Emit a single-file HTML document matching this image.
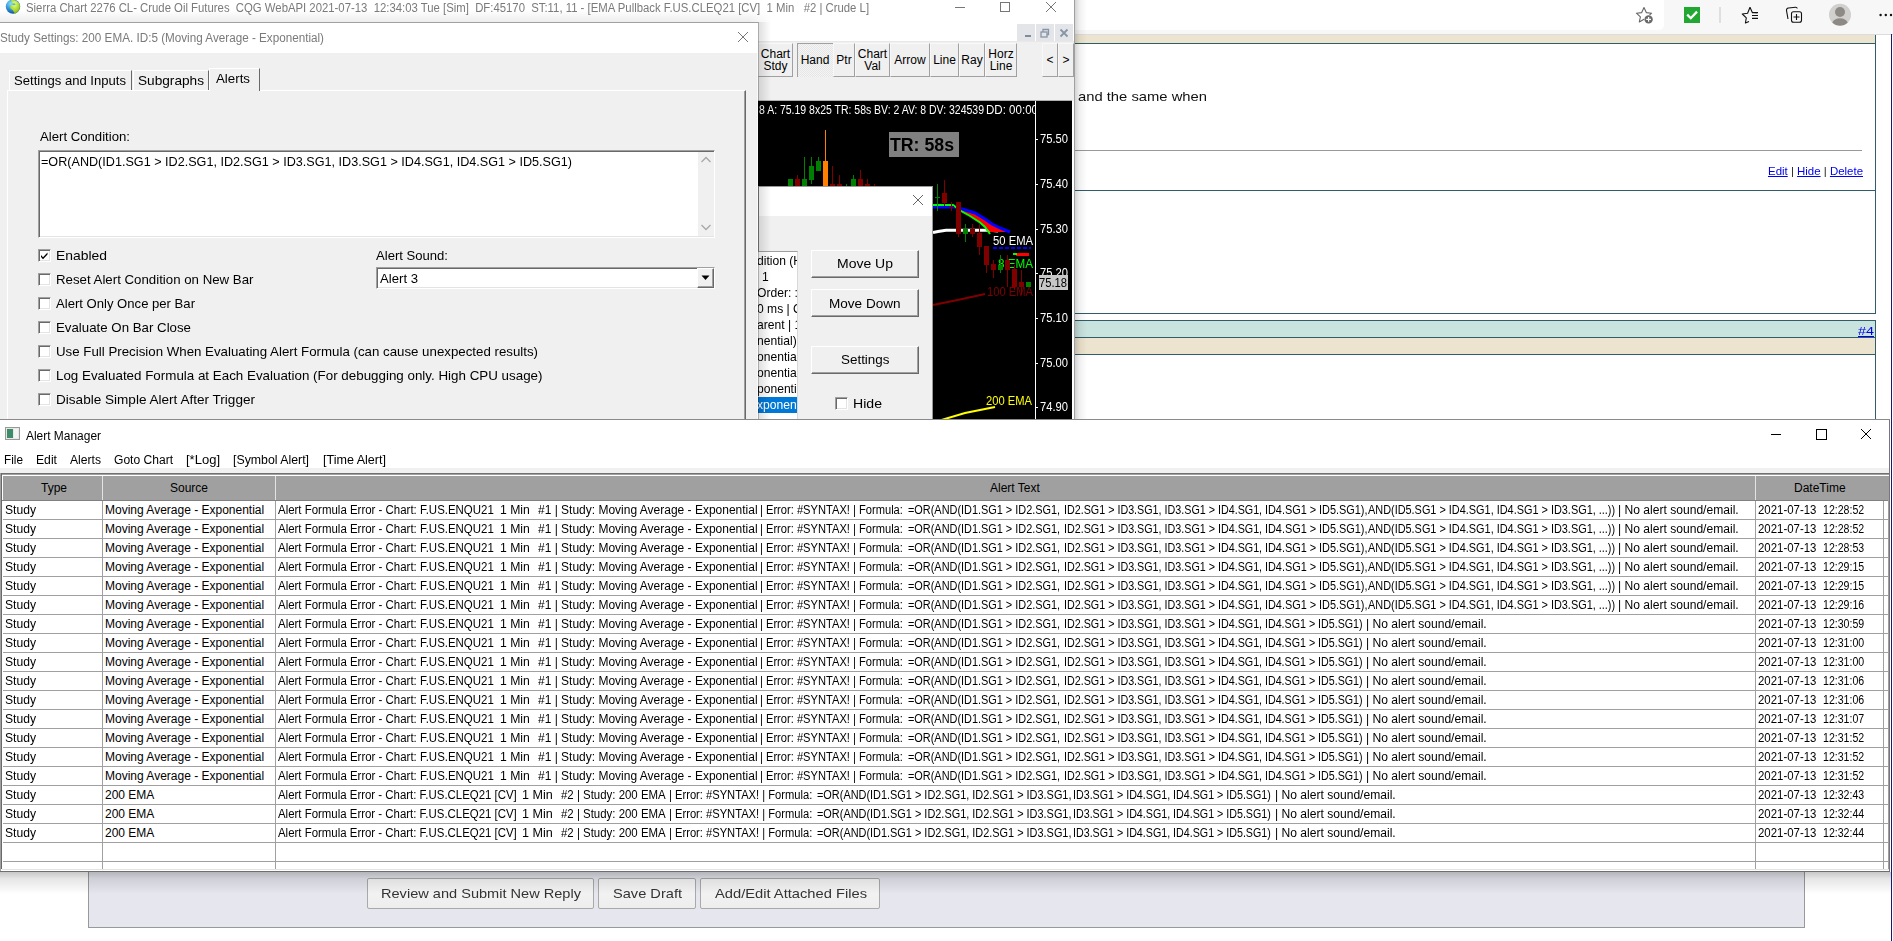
<!DOCTYPE html>
<html><head><meta charset="utf-8"><style>
html,body{margin:0;padding:0;width:1893px;height:941px;overflow:hidden;background:#fff;position:relative;font-family:"Liberation Sans",sans-serif;}
.t{position:absolute;white-space:pre;font-family:"Liberation Sans",sans-serif;}
.c{font-size:12px;line-height:12px;color:#000;}
.r{position:absolute;}
svg{position:absolute;}
</style></head><body>
<div class="r" style="left:1074px;top:0px;width:819px;height:34px;background:#f7f7f7;"></div>
<div class="r" style="left:1074px;top:0px;width:590px;height:30px;background:#ffffff;border-bottom-right-radius:5px;"></div>
<div class="r" style="left:1074px;top:34px;width:819px;height:1px;background:#dcdcdc;"></div>
<svg style="left:1630px;top:0px" width="263" height="32" viewBox="1630 0 263 32"><path d="M1644 7.5 L1646.3 12.6 L1651.6 13.2 L1647.6 16.8 L1648.7 22 L1644 19.3 L1639.3 22 L1640.4 16.8 L1636.4 13.2 L1641.7 12.6 Z" fill="none" stroke="#666" stroke-width="1.1" stroke-linejoin="round"></path><circle cx="1648.6" cy="19.4" r="4.6" fill="#fff"></circle><circle cx="1648.6" cy="19.4" r="4.2" fill="#6b6b6b"></circle><path d="M1648.6 17v4.8M1646.2 19.4h4.8" stroke="#fff" stroke-width="1.2"></path><rect x="1684" y="7" width="16" height="16" fill="#22a832"></rect><path d="M1687.2 14.6 L1690.8 18.2 L1697 11.6" stroke="#fff" stroke-width="2.3" fill="none"></path><rect x="1719.5" y="7" width="1" height="16" fill="#c8c8c8"></rect><path d="M1750 7.3 L1752.2 12.2 L1757 12.6 M1749 21.5 L1745.4 23 L1746.3 17.8 L1742.3 14 L1747.6 13.3 L1750 7.3" fill="none" stroke="#111" stroke-width="1.1" stroke-linejoin="round"></path><path d="M1752 12.6h6M1752 15.5h6M1752 18.4h6" stroke="#111" stroke-width="1.1"></path><path d="M1788 19 L1786.5 10.5 Q1786.3 8.3 1788.5 8 L1795.5 7.2 Q1797 7.1 1797.3 8.5" fill="none" stroke="#111" stroke-width="1.1"></path><rect x="1791.5" y="11.8" width="10" height="10.5" rx="2" fill="#f7f7f7" stroke="#111" stroke-width="1.1"></rect><path d="M1796.5 14v6M1793.5 17h6" stroke="#111" stroke-width="1.1"></path><circle cx="1840" cy="14.8" r="11" fill="#d2d0ce"></circle><circle cx="1840" cy="12" r="5" fill="#8d8a86"></circle><path d="M1832.3 22.8 Q1834 18.3 1840 18.2 Q1846 18.3 1847.7 22.8 Q1844.5 25.8 1840 25.8 Q1835.5 25.8 1832.3 22.8Z" fill="#8d8a86"></path><circle cx="1880.6" cy="15" r="1.2" fill="#111"></circle><circle cx="1885.8" cy="15" r="1.2" fill="#111"></circle><circle cx="1891" cy="15" r="1.2" fill="#111"></circle></svg>
<div class="r" style="left:1074px;top:35px;width:801px;height:8px;background:#ede4cf;"></div>
<div class="r" style="left:1074px;top:43px;width:802px;height:1px;background:#2f5d68;"></div>
<div class="r" style="left:1875px;top:35px;width:1px;height:279px;background:#2f5d68;"></div>
<div class="t " style="left: 1078px; top: 90px; font-size: 13px; line-height: 13px; color: rgb(17, 17, 17); font-weight: 400; transform: scaleX(1.1369); transform-origin: 0px 0px;">and the same when</div>
<div class="r" style="left:1074px;top:150px;width:788px;height:1px;background:#999;"></div>
<div class="t" style="left: 1768px; top: 165.7px; font-size: 11px; line-height: 11px; color: rgb(34, 34, 34); transform: scaleX(1.0398); transform-origin: 0px 0px;"><u style="color:#0000ee">Edit</u> | <u style="color:#0000ee">Hide</u> | <u style="color:#0000ee">Delete</u></div>
<div class="r" style="left:1074px;top:190px;width:802px;height:1px;background:#2f5d68;"></div>
<div class="r" style="left:1074px;top:313px;width:802px;height:1px;background:#2f5d68;"></div>
<div class="r" style="left:1074px;top:320px;width:802px;height:1px;background:#2f5d68;"></div>
<div class="r" style="left:1074px;top:321px;width:801px;height:17px;background:#c9e3df;"></div>
<div class="r" style="left:1074px;top:337px;width:802px;height:1px;background:#2f5d68;"></div>
<div class="r" style="left:1074px;top:338px;width:801px;height:16px;background:#ede4cf;"></div>
<div class="r" style="left:1074px;top:354px;width:802px;height:1px;background:#2f5d68;"></div>
<div class="r" style="left:1875px;top:320px;width:1px;height:550px;background:#2f5d68;"></div>
<div class="t" style="left: 1858px; top: 325.7px; font-size: 11px; line-height: 11px; color: rgb(0, 0, 238); transform: scaleX(1.3061); transform-origin: 0px 0px;"><u>#4</u></div>
<div class="r" style="left:1891px;top:34px;width:1px;height:907px;background:#1a1a6e;"></div>
<div class="r" style="left:88px;top:860px;width:1717px;height:68px;background:#e6e6ef;border:1px solid #999;box-sizing:border-box;"></div>
<div class="r" style="left:367px;top:878px;width:227px;height:31px;background:linear-gradient(#f7f7f7,#ededed);border:1px solid #a9a9a9;box-sizing:border-box;border-radius:2px"></div>
<div class="t " style="left: 381px; top: 887px; font-size: 13px; line-height: 13px; color: rgb(51, 51, 51); font-weight: 400; transform: scaleX(1.1206); transform-origin: 0px 0px;">Review and Submit New Reply</div>
<div class="r" style="left:598px;top:878px;width:98px;height:31px;background:linear-gradient(#f7f7f7,#ededed);border:1px solid #a9a9a9;box-sizing:border-box;border-radius:2px"></div>
<div class="t " style="left: 613px; top: 887px; font-size: 13px; line-height: 13px; color: rgb(51, 51, 51); font-weight: 400; transform: scaleX(1.1234); transform-origin: 0px 0px;">Save Draft</div>
<div class="r" style="left:700px;top:878px;width:180px;height:31px;background:linear-gradient(#f7f7f7,#ededed);border:1px solid #a9a9a9;box-sizing:border-box;border-radius:2px"></div>
<div class="t " style="left: 715px; top: 887px; font-size: 13px; line-height: 13px; color: rgb(51, 51, 51); font-weight: 400; transform: scaleX(1.1308); transform-origin: 0px 0px;">Add/Edit Attached Files</div>
<div class="r" style="left:0;top:872px;width:1891px;height:22px;background:linear-gradient(rgba(0,0,0,0.22),rgba(0,0,0,0.1) 30%,rgba(0,0,0,0));"></div>
<div class="r" style="left:0px;top:0px;width:1074px;height:22px;background:#fff;"></div>
<div class="r" style="left:1074px;top:0px;width:1px;height:420px;background:#a0a0a0;"></div>
<div class="r" style="left:1075px;top:0;width:12px;height:420px;background:linear-gradient(90deg,rgba(0,0,0,0.17),rgba(0,0,0,0.06) 40%,rgba(0,0,0,0));"></div>
<div class="r" style="left:0;top:10px;width:772px;height:12px;background:linear-gradient(rgba(0,0,0,0),rgba(0,0,0,0.07));-webkit-mask-image:linear-gradient(90deg,#000 97%,transparent);mask-image:linear-gradient(90deg,#000 97%,transparent)"></div>
<svg style="left:5px;top:-1px" width="16" height="16" viewBox="0 0 16 16"><defs><radialGradient id="gb" cx="0.35" cy="0.3" r="0.8"><stop offset="0" stop-color="#7fe0ff"></stop><stop offset="0.5" stop-color="#2f8fd8"></stop><stop offset="1" stop-color="#0b3f96"></stop></radialGradient><radialGradient id="gn" cx="0.45" cy="0.3" r="0.8"><stop offset="0" stop-color="#e8ff80"></stop><stop offset="0.6" stop-color="#a6d42a"></stop><stop offset="1" stop-color="#6c9a10"></stop></radialGradient></defs><circle cx="8" cy="7.6" r="7.2" fill="url(#gb)"></circle><path d="M6 1.2 Q11 0.6 14.4 4.5 Q15.6 8 14 11 Q12.5 13.8 10 14.8 L8.2 12 Q7.6 10.5 5.8 10 Q4.6 8.6 5.4 6.6 Q6.4 5.6 9 6.2 L10.8 5.2 Q9.5 4 7.6 4.4 Q6.2 3.8 6 1.2Z" fill="url(#gn)"></path></svg>
<div class="t " style="left: 26px; top: 1.84px; font-size: 12px; line-height: 12px; color: rgb(122, 122, 122); font-weight: 400; transform: scaleX(0.9449); transform-origin: 0px 0px;">Sierra Chart 2276 CL- Crude Oil Futures  CQG WebAPI 2021-07-13  12:34:03 Tue [Sim]  DF:45170  ST:11, 11 - [EMA Pullback F.US.CLEQ21 [CV]  1 Min   #2 | Crude L]</div>
<div class="r" style="left:955px;top:7px;width:10px;height:1px;background:#777;"></div>
<div class="r" style="left:1000px;top:2px;width:8px;height:8px;border:1px solid #777"></div>
<svg style="left:1045px;top:1px" width="12" height="12"><path d="M1 1L11 11M11 1L1 11" stroke="#777" stroke-width="1"></path></svg>
<div class="r" style="left:758px;top:22px;width:316px;height:20px;background:#fff;"></div>
<div class="r" style="left:1017px;top:24px;width:18px;height:18px;background:#e3e5e8;"></div>
<div class="r" style="left:1036px;top:24px;width:18px;height:18px;background:#e3e5e8;"></div>
<div class="r" style="left:1055px;top:24px;width:18px;height:18px;background:#e3e5e8;"></div>
<div class="r" style="left:1025px;top:35px;width:6px;height:2px;background:#7f8c9a;"></div>
<svg style="left:1040px;top:28px" width="10" height="10"><rect x="1" y="4" width="6" height="5" fill="none" stroke="#8796a6" stroke-width="1.3"></rect><path d="M3 4V1.5H8.5V6.5H7" fill="none" stroke="#8796a6" stroke-width="1.3"></path></svg>
<svg style="left:1059px;top:28px" width="10" height="10"><path d="M1.5 1.5L8.5 8.5M8.5 1.5L1.5 8.5" stroke="#8796a6" stroke-width="1.8"></path></svg>
<div class="r" style="left:758px;top:42px;width:316px;height:59px;background:#f0f0f0;"></div>
<div class="r" style="left:758px;top:41px;width:316px;height:1px;background:#e8e8e8;"></div>
<div class="r" style="left:758px;top:43px;width:35px;height:34px;box-sizing:border-box;border-right:1px solid #a0a0a0;border-bottom:1px solid #a0a0a0;border-left:1px solid #f8f8f8;border-top:1px solid #f8f8f8;background:#f0f0f0"></div>
<div class="t" style="left:758px;width:35px;text-align:center;top:48px;font-size:12px;line-height:12px;color:#000">Chart<br>Stdy</div>
<div class="r" style="left:797px;top:43px;width:36px;height:34px;box-sizing:border-box;border-left:1px solid #a0a0a0;border-top:1px solid #a0a0a0;background:repeating-conic-gradient(#f4f4f4 0 25%,#e6e6e6 0 50%) 0 0/2px 2px"></div>
<div class="t" style="left:797px;width:36px;text-align:center;top:54px;font-size:12px;line-height:12px;color:#000">Hand</div>
<div class="r" style="left:833px;top:43px;width:22px;height:34px;box-sizing:border-box;border-right:1px solid #a0a0a0;border-bottom:1px solid #a0a0a0;border-left:1px solid #f8f8f8;border-top:1px solid #f8f8f8;background:#f0f0f0"></div>
<div class="t" style="left:833px;width:22px;text-align:center;top:54px;font-size:12px;line-height:12px;color:#000">Ptr</div>
<div class="r" style="left:855px;top:43px;width:35px;height:34px;box-sizing:border-box;border-right:1px solid #a0a0a0;border-bottom:1px solid #a0a0a0;border-left:1px solid #f8f8f8;border-top:1px solid #f8f8f8;background:#f0f0f0"></div>
<div class="t" style="left:855px;width:35px;text-align:center;top:48px;font-size:12px;line-height:12px;color:#000">Chart<br>Val</div>
<div class="r" style="left:890px;top:43px;width:40px;height:34px;box-sizing:border-box;border-right:1px solid #a0a0a0;border-bottom:1px solid #a0a0a0;border-left:1px solid #f8f8f8;border-top:1px solid #f8f8f8;background:#f0f0f0"></div>
<div class="t" style="left:890px;width:40px;text-align:center;top:54px;font-size:12px;line-height:12px;color:#000">Arrow</div>
<div class="r" style="left:930px;top:43px;width:29px;height:34px;box-sizing:border-box;border-right:1px solid #a0a0a0;border-bottom:1px solid #a0a0a0;border-left:1px solid #f8f8f8;border-top:1px solid #f8f8f8;background:#f0f0f0"></div>
<div class="t" style="left:930px;width:29px;text-align:center;top:54px;font-size:12px;line-height:12px;color:#000">Line</div>
<div class="r" style="left:959px;top:43px;width:26px;height:34px;box-sizing:border-box;border-right:1px solid #a0a0a0;border-bottom:1px solid #a0a0a0;border-left:1px solid #f8f8f8;border-top:1px solid #f8f8f8;background:#f0f0f0"></div>
<div class="t" style="left:959px;width:26px;text-align:center;top:54px;font-size:12px;line-height:12px;color:#000">Ray</div>
<div class="r" style="left:985px;top:43px;width:32px;height:34px;box-sizing:border-box;border-right:1px solid #a0a0a0;border-bottom:1px solid #a0a0a0;border-left:1px solid #f8f8f8;border-top:1px solid #f8f8f8;background:#f0f0f0"></div>
<div class="t" style="left:985px;width:32px;text-align:center;top:48px;font-size:12px;line-height:12px;color:#000">Horz<br>Line</div>
<div class="r" style="left:1042px;top:43px;width:16px;height:34px;box-sizing:border-box;border-right:1px solid #a0a0a0;border-bottom:1px solid #a0a0a0;border-left:1px solid #f8f8f8;border-top:1px solid #f8f8f8;background:#f0f0f0"></div>
<div class="t" style="left:1042px;width:16px;text-align:center;top:54px;font-size:12px;line-height:12px;color:#000">&lt;</div>
<div class="r" style="left:1058px;top:43px;width:16px;height:34px;box-sizing:border-box;border-right:1px solid #a0a0a0;border-bottom:1px solid #a0a0a0;border-left:1px solid #f8f8f8;border-top:1px solid #f8f8f8;background:#f0f0f0"></div>
<div class="t" style="left:1058px;width:16px;text-align:center;top:54px;font-size:12px;line-height:12px;color:#000">&gt;</div>
<div class="r" style="left:1072px;top:101px;width:2px;height:319px;background:#fff;"></div>
<div class="r" style="left:758px;top:100px;width:314px;height:1px;background:#b0b0b0;"></div>
<div class="r" style="left:758px;top:101px;width:314px;height:319px;background:#000;"></div>
<div class="t " style="left: 759px; top: 103.84px; font-size: 12px; line-height: 12px; color: rgb(255, 255, 255); font-weight: 400; transform: scaleX(0.873); transform-origin: 0px 0px;">8 A: 75.19 8x25 TR: 58s BV: 2 AV: 8 DV: 324539</div>
<div class="t " style="left: 986px; top: 103.84px; font-size: 12px; line-height: 12px; color: rgb(255, 255, 255); font-weight: 400; clip-path: inset(0px 3px 0px 0px); transform: scaleX(0.9624); transform-origin: 0px 0px;">DD: 00:00</div>
<div class="r" style="left:1035px;top:101px;width:1px;height:319px;background:#fff;"></div>
<div class="r" style="left:1036px;top:139px;width:2px;height:1px;background:#fff;"></div>
<div class="t " style="left: 1040px; top: 132.84px; font-size: 12px; line-height: 12px; color: rgb(255, 255, 255); font-weight: 400; transform: scaleX(0.9324); transform-origin: 0px 0px;">75.50</div>
<div class="r" style="left:1036px;top:184px;width:2px;height:1px;background:#fff;"></div>
<div class="t " style="left: 1040px; top: 177.84px; font-size: 12px; line-height: 12px; color: rgb(255, 255, 255); font-weight: 400; transform: scaleX(0.9324); transform-origin: 0px 0px;">75.40</div>
<div class="r" style="left:1036px;top:229px;width:2px;height:1px;background:#fff;"></div>
<div class="t " style="left: 1040px; top: 222.84px; font-size: 12px; line-height: 12px; color: rgb(255, 255, 255); font-weight: 400; transform: scaleX(0.9324); transform-origin: 0px 0px;">75.30</div>
<div class="r" style="left:1036px;top:273px;width:2px;height:1px;background:#fff;"></div>
<div class="t " style="left: 1040px; top: 266.84px; font-size: 12px; line-height: 12px; color: rgb(255, 255, 255); font-weight: 400; transform: scaleX(0.9324); transform-origin: 0px 0px;">75.20</div>
<div class="r" style="left:1036px;top:318px;width:2px;height:1px;background:#fff;"></div>
<div class="t " style="left: 1040px; top: 311.84px; font-size: 12px; line-height: 12px; color: rgb(255, 255, 255); font-weight: 400; transform: scaleX(0.9324); transform-origin: 0px 0px;">75.10</div>
<div class="r" style="left:1036px;top:363px;width:2px;height:1px;background:#fff;"></div>
<div class="t " style="left: 1040px; top: 356.84px; font-size: 12px; line-height: 12px; color: rgb(255, 255, 255); font-weight: 400; transform: scaleX(0.9324); transform-origin: 0px 0px;">75.00</div>
<div class="r" style="left:1036px;top:407px;width:2px;height:1px;background:#fff;"></div>
<div class="t " style="left: 1040px; top: 400.84px; font-size: 12px; line-height: 12px; color: rgb(255, 255, 255); font-weight: 400; transform: scaleX(0.9324); transform-origin: 0px 0px;">74.90</div>
<div class="r" style="left:1039px;top:275px;width:29px;height:15px;background:#c8c8c8;"></div>
<div class="t " style="left: 1039px; top: 276.84px; font-size: 12px; line-height: 12px; color: rgb(0, 0, 0); font-weight: 400; transform: scaleX(0.9324); transform-origin: 0px 0px;">75.18</div>
<div class="r" style="left:889px;top:132px;width:70px;height:25px;background:#808080;"></div>
<div class="t " style="left: 890px; top: 137.19px; font-size: 17.5px; line-height: 17.5px; color: rgb(0, 0, 0); font-weight: 700; transform: scaleX(1.0124); transform-origin: 0px 0px;">TR: 58s</div>
<div class="t " style="left: 993px; top: 234.84px; font-size: 12px; line-height: 12px; color: rgb(255, 255, 255); font-weight: 400; transform: scaleX(0.937); transform-origin: 0px 0px;">50 EMA</div>
<div class="r" style="left:993px;top:247px;width:38px;height:2px;background:repeating-linear-gradient(90deg,#0000ff 0 4px,transparent 4px 6px)"></div>
<div class="r" style="left:1016px;top:253px;width:13px;height:3px;background:#ff0000;"></div>
<div class="r" style="left:1013px;top:253px;width:4px;height:2px;background:#00ff00;"></div>
<div class="t " style="left: 998px; top: 257.84px; font-size: 12px; line-height: 12px; color: rgb(0, 255, 0); font-weight: 400; transform: scaleX(0.9718); transform-origin: 0px 0px;">8 EMA</div>
<div class="t " style="left: 987px; top: 285.84px; font-size: 12px; line-height: 12px; color: rgb(128, 0, 0); font-weight: 400; transform: scaleX(0.9319); transform-origin: 0px 0px;">100 EMA</div>
<div class="t " style="left: 986px; top: 394.84px; font-size: 12px; line-height: 12px; color: rgb(255, 255, 0); font-weight: 400; transform: scaleX(0.9319); transform-origin: 0px 0px;">200 EMA</div>
<svg style="left:758px;top:101px" width="277" height="319" viewBox="758 101 277 319"><path d="M933 232.5 L938 231.5 L946 230.2 L990 230.2 L998 231" stroke="#fff" stroke-width="3" fill="none"></path><path d="M953 205 L961 211 L970 216 L980 222.5 L985 227 L990 232 L1008 232 L1000 228 L992 224 L985 219 L975 213 L962 209 L955 207 Z" fill="#ff0000"></path><path d="M933 207 L955 207 L962 209 L975 213 L985 219 L992 224 L1000 228 L1010 232" stroke="#0000ff" stroke-width="3" fill="none"></path><path d="M933 205 L953 205 L961 211 L970 216 L980 222.5 L985 227 L990 234" stroke="#00ff00" stroke-width="2" fill="none"></path><path d="M933 305 L960 299.5 L985 294" stroke="#800000" stroke-width="2" fill="none"></path><path d="M938 421 L965 413 L995 407" stroke="#ffff00" stroke-width="2" fill="none"></path><rect x="790" y="179" width="1" height="11" fill="#008000"></rect><rect x="788" y="179" width="5" height="11" fill="#008000"></rect><rect x="797" y="175" width="1" height="15" fill="#800000"></rect><rect x="795" y="179" width="5" height="11" fill="#800000"></rect><rect x="804" y="157" width="1" height="33" fill="#008000"></rect><rect x="802" y="179" width="5" height="11" fill="#008000"></rect><rect x="811" y="157" width="1" height="27" fill="#008000"></rect><rect x="809" y="166" width="5" height="14" fill="#008000"></rect><rect x="818" y="157" width="1" height="14" fill="#008000"></rect><rect x="816" y="161" width="5" height="10" fill="#008000"></rect><rect x="825" y="130" width="1" height="60" fill="#ff8000"></rect><rect x="823" y="161" width="5" height="29" fill="#ff8000"></rect><rect x="832" y="166" width="1" height="24" fill="#800000"></rect><rect x="830" y="184" width="5" height="6" fill="#800000"></rect><rect x="839" y="175" width="1" height="15" fill="#800000"></rect><rect x="837" y="184" width="5" height="6" fill="#800000"></rect><rect x="846" y="184" width="1" height="6" fill="#008000"></rect><rect x="844" y="186" width="5" height="4" fill="#008000"></rect><rect x="853" y="175" width="1" height="15" fill="#008000"></rect><rect x="851" y="179" width="5" height="11" fill="#008000"></rect><rect x="860" y="170" width="1" height="20" fill="#800000"></rect><rect x="858" y="179" width="5" height="11" fill="#800000"></rect><rect x="867" y="179" width="1" height="11" fill="#800000"></rect><rect x="865" y="184" width="5" height="6" fill="#800000"></rect><rect x="874" y="184" width="1" height="6" fill="#800000"></rect><rect x="872" y="186" width="5" height="4" fill="#800000"></rect><rect x="937" y="184" width="1" height="27" fill="#008000"></rect><rect x="935" y="197" width="5" height="1" fill="#008000"></rect><rect x="944" y="180" width="1" height="26" fill="#800000"></rect><rect x="942" y="193" width="5" height="10" fill="#800000"></rect><rect x="951" y="202" width="1" height="9" fill="#800000"></rect><rect x="949" y="206" width="5" height="1" fill="#800000"></rect><rect x="958" y="202" width="1" height="35" fill="#800000"></rect><rect x="956" y="202" width="5" height="32" fill="#800000"></rect><rect x="965" y="224" width="1" height="18" fill="#008000"></rect><rect x="963" y="229" width="5" height="5" fill="#008000"></rect><rect x="972" y="224" width="1" height="13" fill="#800000"></rect><rect x="970" y="229" width="5" height="5" fill="#800000"></rect><rect x="979" y="224" width="1" height="31" fill="#800000"></rect><rect x="977" y="233" width="5" height="14" fill="#800000"></rect><rect x="986" y="246" width="1" height="27" fill="#800000"></rect><rect x="984" y="246" width="5" height="19" fill="#800000"></rect><rect x="993" y="260" width="1" height="18" fill="#800000"></rect><rect x="991" y="264" width="5" height="6" fill="#800000"></rect><rect x="1000" y="255" width="1" height="18" fill="#008000"></rect><rect x="998" y="265" width="5" height="5" fill="#008000"></rect><rect x="1007" y="255" width="1" height="32" fill="#800000"></rect><rect x="1005" y="260" width="5" height="10" fill="#800000"></rect><rect x="1014" y="265" width="1" height="25" fill="#800000"></rect><rect x="1012" y="269" width="5" height="18" fill="#800000"></rect><rect x="1021" y="270" width="1" height="25" fill="#800000"></rect><rect x="1019" y="282" width="5" height="5" fill="#800000"></rect><rect x="1028" y="282" width="1" height="5" fill="#008000"></rect><rect x="1026" y="282" width="5" height="5" fill="#008000"></rect></svg>
<div class="r" style="left:758px;top:186px;width:175px;height:234px;background:#f0f0f0;border:1px solid #999;box-sizing:border-box;"></div>
<div class="r" style="left:759px;top:187px;width:173px;height:29px;background:#fff;"></div>
<svg style="left:912px;top:194px" width="12" height="12"><path d="M1 1L11 11M11 1L1 11" stroke="#666" stroke-width="1"></path></svg>
<div class="r" style="left:758px;top:251px;width:40px;height:169px;background:#fff;border-right:1px solid #d8d8d8;border-top:1px solid #a0a0a0;box-sizing:border-box;overflow:hidden">
<div class="t" style="left:-1px;top:2.00px;font-size:13px;line-height:13px;color:#000;transform:scaleX(0.93);transform-origin:0 0">dition (H</div>
<div class="t" style="left:4px;top:18.00px;font-size:13px;line-height:13px;color:#000;transform:scaleX(0.93);transform-origin:0 0">1</div>
<div class="t" style="left:-1px;top:34.00px;font-size:13px;line-height:13px;color:#000;transform:scaleX(0.93);transform-origin:0 0">Order: :</div>
<div class="t" style="left:-1px;top:50.00px;font-size:13px;line-height:13px;color:#000;transform:scaleX(0.93);transform-origin:0 0">0 ms | C</div>
<div class="t" style="left:-1px;top:66.00px;font-size:13px;line-height:13px;color:#000;transform:scaleX(0.93);transform-origin:0 0">arent | 1</div>
<div class="t" style="left:-1px;top:82.00px;font-size:13px;line-height:13px;color:#000;transform:scaleX(0.93);transform-origin:0 0">nential)</div>
<div class="t" style="left:-1px;top:98.00px;font-size:13px;line-height:13px;color:#000;transform:scaleX(0.93);transform-origin:0 0">onentia</div>
<div class="t" style="left:-1px;top:114.00px;font-size:13px;line-height:13px;color:#000;transform:scaleX(0.93);transform-origin:0 0">onentia</div>
<div class="t" style="left:-1px;top:130.00px;font-size:13px;line-height:13px;color:#000;transform:scaleX(0.93);transform-origin:0 0">ponenti</div>
<div class="r" style="left:0;top:145px;width:39px;height:16px;background:#0078d7"></div>
<div class="t" style="left:-1px;top:146px;font-size:13px;line-height:13px;color:#fff;transform:scaleX(0.93);transform-origin:0 0">xponen</div>
</div>
<div class="r" style="left:811px;top:250px;width:108px;height:28px;box-sizing:border-box;background:#f0f0f0;border-top:1px solid #fff;border-left:1px solid #fff;border-right:1px solid #696969;border-bottom:1px solid #696969;box-shadow:inset -1px -1px 0 #a0a0a0"></div>
<div class="t " style="left: 837px; top: 257px; font-size: 13px; line-height: 13px; color: rgb(0, 0, 0); font-weight: 400; transform: scaleX(1.0763); transform-origin: 0px 0px;">Move Up</div>
<div class="r" style="left:811px;top:289px;width:108px;height:28px;box-sizing:border-box;background:#f0f0f0;border-top:1px solid #fff;border-left:1px solid #fff;border-right:1px solid #696969;border-bottom:1px solid #696969;box-shadow:inset -1px -1px 0 #a0a0a0"></div>
<div class="t " style="left: 829px; top: 297px; font-size: 13px; line-height: 13px; color: rgb(0, 0, 0); font-weight: 400; transform: scaleX(1.0417); transform-origin: 0px 0px;">Move Down</div>
<div class="r" style="left:811px;top:346px;width:108px;height:28px;box-sizing:border-box;background:#f0f0f0;border-top:1px solid #fff;border-left:1px solid #fff;border-right:1px solid #696969;border-bottom:1px solid #696969;box-shadow:inset -1px -1px 0 #a0a0a0"></div>
<div class="t " style="left: 841px; top: 353px; font-size: 13px; line-height: 13px; color: rgb(0, 0, 0); font-weight: 400; transform: scaleX(1.0323); transform-origin: 0px 0px;">Settings</div>
<div class="r" style="left:835px;top:397px;width:13px;height:13px;background:#fff;border-top:1px solid #a0a0a0;border-left:1px solid #a0a0a0;border-right:1px solid #fff;border-bottom:1px solid #fff;box-sizing:border-box;box-shadow:inset 1px 1px 0 #696969, inset -1px -1px 0 #e3e3e3"></div>
<div class="t " style="left: 853px; top: 397px; font-size: 13px; line-height: 13px; color: rgb(0, 0, 0); font-weight: 400; transform: scaleX(1.0841); transform-origin: 0px 0px;">Hide</div>
<div class="r" style="left:759px;top:22px;width:12px;height:398px;background:linear-gradient(90deg,rgba(0,0,0,0.12),rgba(0,0,0,0));"></div>
<div class="r" style="left:0px;top:22px;width:758px;height:398px;background:#f0f0f0;"></div>
<div class="r" style="left:757px;top:53px;width:1px;height:367px;background:#fbfbfb;"></div>
<div class="r" style="left:758px;top:22px;width:1px;height:398px;background:rgba(0,0,0,0.33);"></div>
<div class="r" style="left:0px;top:22px;width:758px;height:1px;background:rgba(0,0,0,0.33);"></div>
<div class="r" style="left:0px;top:23px;width:758px;height:30px;background:#fff;"></div>
<div class="t " style="left: 0px; top: 31.84px; font-size: 12px; line-height: 12px; color: rgb(122, 122, 122); font-weight: 400; transform: scaleX(0.9741); transform-origin: 0px 0px;">Study Settings: 200 EMA. ID:5 (Moving Average - Exponential)</div>
<svg style="left:737px;top:31px" width="12" height="12"><path d="M1 1L11 11M11 1L1 11" stroke="#777" stroke-width="1"></path></svg>
<div class="r" style="left:7px;top:90px;width:739px;height:340px;box-sizing:border-box;border-left:1px solid #fff;border-top:1px solid #fff;border-right:1px solid #696969;box-shadow:inset -1px 0 0 #a0a0a0"></div>
<div class="r" style="left:9px;top:70px;width:123px;height:20px;box-sizing:border-box;border-left:1px solid #fff;border-top:1px solid #fff;border-right:1px solid #696969;"></div>
<div class="r" style="left:133px;top:70px;width:76px;height:20px;box-sizing:border-box;border-left:1px solid #fff;border-top:1px solid #fff;border-right:1px solid #696969;"></div>
<div class="r" style="left:209px;top:68px;width:51px;height:23px;background:#f0f0f0;box-sizing:border-box;border-left:1px solid #fff;border-top:1px solid #fff;border-right:1px solid #696969;"></div>
<div class="t " style="left: 14px; top: 74px; font-size: 13px; line-height: 13px; color: rgb(0, 0, 0); font-weight: 400; transform: scaleX(1.0062); transform-origin: 0px 0px;">Settings and Inputs</div>
<div class="t " style="left: 138px; top: 74px; font-size: 13px; line-height: 13px; color: rgb(0, 0, 0); font-weight: 400; transform: scaleX(1.0494); transform-origin: 0px 0px;">Subgraphs</div>
<div class="t " style="left: 216px; top: 72px; font-size: 13px; line-height: 13px; color: rgb(0, 0, 0); font-weight: 400; transform: scaleX(1.023); transform-origin: 0px 0px;">Alerts</div>
<div class="t " style="left: 40px; top: 130px; font-size: 13px; line-height: 13px; color: rgb(0, 0, 0); font-weight: 400; transform: scaleX(1.0125); transform-origin: 0px 0px;">Alert Condition:</div>
<div class="r" style="left:38px;top:150px;width:677px;height:88px;background:#fff;box-sizing:border-box;border-top:1px solid #a0a0a0;border-left:1px solid #a0a0a0;border-right:1px solid #fff;border-bottom:1px solid #fff;box-shadow:inset 1px 1px 0 #696969, inset -1px -1px 0 #e3e3e3"></div>
<div class="t " style="left: 41px; top: 155px; font-size: 13px; line-height: 13px; color: rgb(0, 0, 0); font-weight: 400; transform: scaleX(0.9702); transform-origin: 0px 0px;">=OR(AND(ID1.SG1 &gt; ID2.SG1, ID2.SG1 &gt; ID3.SG1, ID3.SG1 &gt; ID4.SG1, ID4.SG1 &gt; ID5.SG1)</div>
<div class="r" style="left:698px;top:152px;width:16px;height:84px;background:#f0f0f0;"></div>
<svg style="left:700px;top:155px" width="12" height="9"><path d="M1.5 7L6 2.5L10.5 7" stroke="#a8a8a8" stroke-width="1.3" fill="none"></path></svg>
<svg style="left:700px;top:223px" width="12" height="9"><path d="M1.5 2L6 6.5L10.5 2" stroke="#a8a8a8" stroke-width="1.3" fill="none"></path></svg>
<div class="r" style="left:38px;top:249px;width:13px;height:13px;background:#fff;box-sizing:border-box;border-top:1px solid #a0a0a0;border-left:1px solid #a0a0a0;border-right:1px solid #fff;border-bottom:1px solid #fff;box-shadow:inset 1px 1px 0 #696969, inset -1px -1px 0 #e3e3e3"></div>
<div class="t " style="left: 56px; top: 249px; font-size: 13px; line-height: 13px; color: rgb(0, 0, 0); font-weight: 400; transform: scaleX(1.0688); transform-origin: 0px 0px;">Enabled</div>
<div class="r" style="left:38px;top:273px;width:13px;height:13px;background:#fff;box-sizing:border-box;border-top:1px solid #a0a0a0;border-left:1px solid #a0a0a0;border-right:1px solid #fff;border-bottom:1px solid #fff;box-shadow:inset 1px 1px 0 #696969, inset -1px -1px 0 #e3e3e3"></div>
<div class="t " style="left: 56px; top: 273px; font-size: 13px; line-height: 13px; color: rgb(0, 0, 0); font-weight: 400; transform: scaleX(1.0198); transform-origin: 0px 0px;">Reset Alert Condition on New Bar</div>
<div class="r" style="left:38px;top:297px;width:13px;height:13px;background:#fff;box-sizing:border-box;border-top:1px solid #a0a0a0;border-left:1px solid #a0a0a0;border-right:1px solid #fff;border-bottom:1px solid #fff;box-shadow:inset 1px 1px 0 #696969, inset -1px -1px 0 #e3e3e3"></div>
<div class="t " style="left: 56px; top: 297px; font-size: 13px; line-height: 13px; color: rgb(0, 0, 0); font-weight: 400; transform: scaleX(1.0072); transform-origin: 0px 0px;">Alert Only Once per Bar</div>
<div class="r" style="left:38px;top:321px;width:13px;height:13px;background:#fff;box-sizing:border-box;border-top:1px solid #a0a0a0;border-left:1px solid #a0a0a0;border-right:1px solid #fff;border-bottom:1px solid #fff;box-shadow:inset 1px 1px 0 #696969, inset -1px -1px 0 #e3e3e3"></div>
<div class="t " style="left: 56px; top: 321px; font-size: 13px; line-height: 13px; color: rgb(0, 0, 0); font-weight: 400; transform: scaleX(1.0209); transform-origin: 0px 0px;">Evaluate On Bar Close</div>
<div class="r" style="left:38px;top:345px;width:13px;height:13px;background:#fff;box-sizing:border-box;border-top:1px solid #a0a0a0;border-left:1px solid #a0a0a0;border-right:1px solid #fff;border-bottom:1px solid #fff;box-shadow:inset 1px 1px 0 #696969, inset -1px -1px 0 #e3e3e3"></div>
<div class="t " style="left: 56px; top: 345px; font-size: 13px; line-height: 13px; color: rgb(0, 0, 0); font-weight: 400; transform: scaleX(1.0216); transform-origin: 0px 0px;">Use Full Precision When Evaluating Alert Formula (can cause unexpected results)</div>
<div class="r" style="left:38px;top:369px;width:13px;height:13px;background:#fff;box-sizing:border-box;border-top:1px solid #a0a0a0;border-left:1px solid #a0a0a0;border-right:1px solid #fff;border-bottom:1px solid #fff;box-shadow:inset 1px 1px 0 #696969, inset -1px -1px 0 #e3e3e3"></div>
<div class="t " style="left: 56px; top: 369px; font-size: 13px; line-height: 13px; color: rgb(0, 0, 0); font-weight: 400; transform: scaleX(1.0283); transform-origin: 0px 0px;">Log Evaluated Formula at Each Evaluation (For debugging only. High CPU usage)</div>
<div class="r" style="left:38px;top:393px;width:13px;height:13px;background:#fff;box-sizing:border-box;border-top:1px solid #a0a0a0;border-left:1px solid #a0a0a0;border-right:1px solid #fff;border-bottom:1px solid #fff;box-shadow:inset 1px 1px 0 #696969, inset -1px -1px 0 #e3e3e3"></div>
<div class="t " style="left: 56px; top: 393px; font-size: 13px; line-height: 13px; color: rgb(0, 0, 0); font-weight: 400; transform: scaleX(1.0433); transform-origin: 0px 0px;">Disable Simple Alert After Trigger</div>
<svg style="left:38px;top:249px" width="13" height="13"><path d="M3 6 L5 8.3 L9.5 3.5 L9.5 5.5 L5 10.3 L3 8 Z" fill="#000"></path></svg>
<div class="t " style="left: 376px; top: 249px; font-size: 13px; line-height: 13px; color: rgb(0, 0, 0); font-weight: 400; transform: scaleX(1.0063); transform-origin: 0px 0px;">Alert Sound:</div>
<div class="r" style="left:376px;top:267px;width:339px;height:22px;background:#fff;box-sizing:border-box;border-top:1px solid #a0a0a0;border-left:1px solid #a0a0a0;border-right:1px solid #fff;border-bottom:1px solid #fff;box-shadow:inset 1px 1px 0 #696969, inset -1px -1px 0 #e3e3e3"></div>
<div class="t " style="left: 380px; top: 272px; font-size: 13px; line-height: 13px; color: rgb(0, 0, 0); font-weight: 400; transform: scaleX(1.0112); transform-origin: 0px 0px;">Alert 3</div>
<div class="r" style="left:697px;top:268px;width:17px;height:20px;background:#f0f0f0;box-sizing:border-box;border-top:1px solid #fff;border-left:1px solid #fff;border-right:1px solid #696969;border-bottom:1px solid #696969;box-shadow:inset -1px -1px 0 #a0a0a0"></div>
<svg style="left:701px;top:275px" width="9" height="6"><path d="M0.5 0.5H8.5L4.5 5Z" fill="#000"></path></svg>
<div class="r" style="left:0px;top:419px;width:1890px;height:1px;background:#8a8a8a;"></div>
<div class="r" style="left:0px;top:420px;width:1890px;height:451px;background:#fff;"></div>
<div class="r" style="left:1889px;top:420px;width:1px;height:452px;background:#777;"></div>
<div class="r" style="left:0px;top:871px;width:1890px;height:1px;background:#6e6e6e;"></div>
<svg style="left:5px;top:427px" width="16" height="14"><rect x="0.5" y="0.5" width="14" height="12" fill="#e8e8e8" stroke="#999"></rect><rect x="2" y="2" width="6" height="9" fill="#3c8c6a"></rect><rect x="9" y="2" width="4" height="9" fill="#f4f4f4"></rect></svg>
<div class="t " style="left: 26px; top: 429.84px; font-size: 12px; line-height: 12px; color: rgb(0, 0, 0); font-weight: 400; transform: scaleX(0.995); transform-origin: 0px 0px;">Alert Manager</div>
<div class="r" style="left:1771px;top:434px;width:10px;height:1px;background:#000;"></div>
<div class="r" style="left:1816px;top:429px;width:9px;height:9px;border:1px solid #000"></div>
<svg style="left:1860px;top:428px" width="12" height="12"><path d="M1 1L11 11M11 1L1 11" stroke="#000" stroke-width="1"></path></svg>
<div class="t " style="left: 4px; top: 453.84px; font-size: 12px; line-height: 12px; color: rgb(0, 0, 0); font-weight: 400; transform: scaleX(0.9822); transform-origin: 0px 0px;">File</div>
<div class="t " style="left: 36px; top: 453.84px; font-size: 12px; line-height: 12px; color: rgb(0, 0, 0); font-weight: 400; transform: scaleX(1.0151); transform-origin: 0px 0px;">Edit</div>
<div class="t " style="left: 70px; top: 453.84px; font-size: 12px; line-height: 12px; color: rgb(0, 0, 0); font-weight: 400; transform: scaleX(1.0102); transform-origin: 0px 0px;">Alerts</div>
<div class="t " style="left: 114px; top: 453.84px; font-size: 12px; line-height: 12px; color: rgb(0, 0, 0); font-weight: 400; transform: scaleX(1.0051); transform-origin: 0px 0px;">Goto Chart</div>
<div class="t " style="left: 186px; top: 453.84px; font-size: 12px; line-height: 12px; color: rgb(0, 0, 0); font-weight: 400; transform: scaleX(1.0842); transform-origin: 0px 0px;">[*Log]</div>
<div class="t " style="left: 233px; top: 453.84px; font-size: 12px; line-height: 12px; color: rgb(0, 0, 0); font-weight: 400; transform: scaleX(1.0266); transform-origin: 0px 0px;">[Symbol Alert]</div>
<div class="t " style="left: 323px; top: 453.84px; font-size: 12px; line-height: 12px; color: rgb(0, 0, 0); font-weight: 400; transform: scaleX(1.0459); transform-origin: 0px 0px;">[Time Alert]</div>
<div class="r" style="left:0px;top:468px;width:1889px;height:5px;background:#f0f0f0;"></div>
<div class="r" style="left:0px;top:473px;width:1889px;height:1px;background:#707070;"></div>
<div class="r" style="left:0px;top:474px;width:1889px;height:1px;background:#a0a0a0;"></div>
<div class="r" style="left:2px;top:475px;width:1887px;height:394px;background:#fff;"></div>
<div class="r" style="left:0px;top:473px;width:1px;height:398px;background:#a0a0a0;"></div>
<div class="r" style="left:1px;top:473px;width:1px;height:396px;background:#696969;"></div>
<div class="r" style="left:3px;top:476px;width:1885px;height:24px;background:#a0a0a0;"></div>
<div class="r" style="left:2px;top:500px;width:1886px;height:1px;background:#808080;"></div>
<div class="r" style="left:102px;top:476px;width:1px;height:24px;background:#e3e3e3;"></div>
<div class="r" style="left:102px;top:501px;width:1px;height:368px;background:#a0a0a0;"></div>
<div class="r" style="left:275px;top:476px;width:1px;height:24px;background:#e3e3e3;"></div>
<div class="r" style="left:275px;top:501px;width:1px;height:368px;background:#a0a0a0;"></div>
<div class="r" style="left:1755px;top:476px;width:1px;height:24px;background:#e3e3e3;"></div>
<div class="r" style="left:1755px;top:501px;width:1px;height:368px;background:#a0a0a0;"></div>
<div class="r" style="left:1883px;top:501px;width:1px;height:368px;background:#a0a0a0;"></div>
<div class="r" style="left:1888px;top:476px;width:1px;height:393px;background:#a0a0a0;"></div>
<div class="r" style="left:2px;top:869px;width:1887px;height:1px;background:#e3e3e3;"></div>
<div class="t " style="left:41px;top:481.84px;font-size:12px;line-height:12px;color:#000;font-weight:400;">Type</div>
<div class="t " style="left:170px;top:481.84px;font-size:12px;line-height:12px;color:#000;font-weight:400;">Source</div>
<div class="t " style="left:990px;top:481.84px;font-size:12px;line-height:12px;color:#000;font-weight:400;">Alert Text</div>
<div class="t " style="left:1794px;top:481.84px;font-size:12px;line-height:12px;color:#000;font-weight:400;">DateTime</div>
<div class="r" style="left:3px;top:519px;width:1885px;height:1px;background:#a0a0a0;"></div>
<div class="r" style="left:3px;top:538px;width:1885px;height:1px;background:#a0a0a0;"></div>
<div class="r" style="left:3px;top:557px;width:1885px;height:1px;background:#a0a0a0;"></div>
<div class="r" style="left:3px;top:576px;width:1885px;height:1px;background:#a0a0a0;"></div>
<div class="r" style="left:3px;top:595px;width:1885px;height:1px;background:#a0a0a0;"></div>
<div class="r" style="left:3px;top:614px;width:1885px;height:1px;background:#a0a0a0;"></div>
<div class="r" style="left:3px;top:633px;width:1885px;height:1px;background:#a0a0a0;"></div>
<div class="r" style="left:3px;top:652px;width:1885px;height:1px;background:#a0a0a0;"></div>
<div class="r" style="left:3px;top:671px;width:1885px;height:1px;background:#a0a0a0;"></div>
<div class="r" style="left:3px;top:690px;width:1885px;height:1px;background:#a0a0a0;"></div>
<div class="r" style="left:3px;top:709px;width:1885px;height:1px;background:#a0a0a0;"></div>
<div class="r" style="left:3px;top:728px;width:1885px;height:1px;background:#a0a0a0;"></div>
<div class="r" style="left:3px;top:747px;width:1885px;height:1px;background:#a0a0a0;"></div>
<div class="r" style="left:3px;top:766px;width:1885px;height:1px;background:#a0a0a0;"></div>
<div class="r" style="left:3px;top:785px;width:1885px;height:1px;background:#a0a0a0;"></div>
<div class="r" style="left:3px;top:804px;width:1885px;height:1px;background:#a0a0a0;"></div>
<div class="r" style="left:3px;top:823px;width:1885px;height:1px;background:#a0a0a0;"></div>
<div class="r" style="left:3px;top:842px;width:1885px;height:1px;background:#a0a0a0;"></div>
<div class="r" style="left:3px;top:861px;width:1885px;height:1px;background:#a0a0a0;"></div>
<div class="t c" style="left: 5px; top: 503.84px; transform: scaleX(1.0102); transform-origin: 0px 0px;">Study</div>
<div class="t c" style="left:105.0px;top:503.84px">Moving Average - Exponential</div>
<div class="t c" style="left: 277.7px; top: 503.84px; transform: scaleX(0.9546); transform-origin: 0px 0px;">Alert Formula Error - Chart: F.US.ENQU21</div>
<div class="t c" style="left: 499.5px; top: 503.84px; transform: scaleX(1.0155); transform-origin: 0px 0px;">1 Min</div>
<div class="t c" style="left: 537.6px; top: 503.84px; transform: scaleX(0.9995); transform-origin: 0px 0px;">#1 | Study: Moving Average - Exponential</div>
<div class="t c" style="left: 760.1px; top: 503.84px; transform: scaleX(0.9276); transform-origin: 0px 0px;">| Error: #SYNTAX! | Formula:</div>
<div class="t c" style="left: 908px; top: 503.84px; transform: scaleX(0.9087); transform-origin: 0px 0px;">=OR(AND(ID1.SG1 &gt; ID2.SG1,</div>
<div class="t c" style="left: 1064.2px; top: 503.84px; transform: scaleX(0.8946); transform-origin: 0px 0px;">ID2.SG1 &gt; ID3.SG1, ID3.SG1 &gt; ID4.SG1,</div>
<div class="t c" style="left: 1264.7px; top: 503.84px; transform: scaleX(0.9058); transform-origin: 0px 0px;">ID4.SG1 &gt; ID5.SG1),</div>
<div class="t c" style="left: 1368.2px; top: 503.84px; transform: scaleX(0.9081); transform-origin: 0px 0px;">AND(ID5.SG1 &gt; ID4.SG1, ID4.SG1 &gt; ID3.SG1, ...))</div>
<div class="t c" style="left: 1618.2px; top: 503.84px; transform: scaleX(1.0071); transform-origin: 0px 0px;">| No alert sound/email.</div>
<div class="t c" style="left: 1757.6px; top: 503.84px; transform: scaleX(0.9513); transform-origin: 0px 0px;">2021-07-13</div>
<div class="t c" style="left: 1823.2px; top: 503.84px; transform: scaleX(0.8819); transform-origin: 0px 0px;">12:28:52</div>
<div class="t c" style="left: 5px; top: 522.84px; transform: scaleX(1.0102); transform-origin: 0px 0px;">Study</div>
<div class="t c" style="left:105.0px;top:522.84px">Moving Average - Exponential</div>
<div class="t c" style="left: 277.7px; top: 522.84px; transform: scaleX(0.9546); transform-origin: 0px 0px;">Alert Formula Error - Chart: F.US.ENQU21</div>
<div class="t c" style="left: 499.5px; top: 522.84px; transform: scaleX(1.0155); transform-origin: 0px 0px;">1 Min</div>
<div class="t c" style="left: 537.6px; top: 522.84px; transform: scaleX(0.9995); transform-origin: 0px 0px;">#1 | Study: Moving Average - Exponential</div>
<div class="t c" style="left: 760.1px; top: 522.84px; transform: scaleX(0.9276); transform-origin: 0px 0px;">| Error: #SYNTAX! | Formula:</div>
<div class="t c" style="left: 908px; top: 522.84px; transform: scaleX(0.9087); transform-origin: 0px 0px;">=OR(AND(ID1.SG1 &gt; ID2.SG1,</div>
<div class="t c" style="left: 1064.2px; top: 522.84px; transform: scaleX(0.8946); transform-origin: 0px 0px;">ID2.SG1 &gt; ID3.SG1, ID3.SG1 &gt; ID4.SG1,</div>
<div class="t c" style="left: 1264.7px; top: 522.84px; transform: scaleX(0.9058); transform-origin: 0px 0px;">ID4.SG1 &gt; ID5.SG1),</div>
<div class="t c" style="left: 1368.2px; top: 522.84px; transform: scaleX(0.9081); transform-origin: 0px 0px;">AND(ID5.SG1 &gt; ID4.SG1, ID4.SG1 &gt; ID3.SG1, ...))</div>
<div class="t c" style="left: 1618.2px; top: 522.84px; transform: scaleX(1.0071); transform-origin: 0px 0px;">| No alert sound/email.</div>
<div class="t c" style="left: 1757.6px; top: 522.84px; transform: scaleX(0.9513); transform-origin: 0px 0px;">2021-07-13</div>
<div class="t c" style="left: 1823.2px; top: 522.84px; transform: scaleX(0.8819); transform-origin: 0px 0px;">12:28:52</div>
<div class="t c" style="left: 5px; top: 541.84px; transform: scaleX(1.0102); transform-origin: 0px 0px;">Study</div>
<div class="t c" style="left:105.0px;top:541.84px">Moving Average - Exponential</div>
<div class="t c" style="left: 277.7px; top: 541.84px; transform: scaleX(0.9546); transform-origin: 0px 0px;">Alert Formula Error - Chart: F.US.ENQU21</div>
<div class="t c" style="left: 499.5px; top: 541.84px; transform: scaleX(1.0155); transform-origin: 0px 0px;">1 Min</div>
<div class="t c" style="left: 537.6px; top: 541.84px; transform: scaleX(0.9995); transform-origin: 0px 0px;">#1 | Study: Moving Average - Exponential</div>
<div class="t c" style="left: 760.1px; top: 541.84px; transform: scaleX(0.9276); transform-origin: 0px 0px;">| Error: #SYNTAX! | Formula:</div>
<div class="t c" style="left: 908px; top: 541.84px; transform: scaleX(0.9087); transform-origin: 0px 0px;">=OR(AND(ID1.SG1 &gt; ID2.SG1,</div>
<div class="t c" style="left: 1064.2px; top: 541.84px; transform: scaleX(0.8946); transform-origin: 0px 0px;">ID2.SG1 &gt; ID3.SG1, ID3.SG1 &gt; ID4.SG1,</div>
<div class="t c" style="left: 1264.7px; top: 541.84px; transform: scaleX(0.9058); transform-origin: 0px 0px;">ID4.SG1 &gt; ID5.SG1),</div>
<div class="t c" style="left: 1368.2px; top: 541.84px; transform: scaleX(0.9081); transform-origin: 0px 0px;">AND(ID5.SG1 &gt; ID4.SG1, ID4.SG1 &gt; ID3.SG1, ...))</div>
<div class="t c" style="left: 1618.2px; top: 541.84px; transform: scaleX(1.0071); transform-origin: 0px 0px;">| No alert sound/email.</div>
<div class="t c" style="left: 1757.6px; top: 541.84px; transform: scaleX(0.9513); transform-origin: 0px 0px;">2021-07-13</div>
<div class="t c" style="left: 1823.2px; top: 541.84px; transform: scaleX(0.8819); transform-origin: 0px 0px;">12:28:53</div>
<div class="t c" style="left: 5px; top: 560.84px; transform: scaleX(1.0102); transform-origin: 0px 0px;">Study</div>
<div class="t c" style="left:105.0px;top:560.84px">Moving Average - Exponential</div>
<div class="t c" style="left: 277.7px; top: 560.84px; transform: scaleX(0.9546); transform-origin: 0px 0px;">Alert Formula Error - Chart: F.US.ENQU21</div>
<div class="t c" style="left: 499.5px; top: 560.84px; transform: scaleX(1.0155); transform-origin: 0px 0px;">1 Min</div>
<div class="t c" style="left: 537.6px; top: 560.84px; transform: scaleX(0.9995); transform-origin: 0px 0px;">#1 | Study: Moving Average - Exponential</div>
<div class="t c" style="left: 760.1px; top: 560.84px; transform: scaleX(0.9276); transform-origin: 0px 0px;">| Error: #SYNTAX! | Formula:</div>
<div class="t c" style="left: 908px; top: 560.84px; transform: scaleX(0.9087); transform-origin: 0px 0px;">=OR(AND(ID1.SG1 &gt; ID2.SG1,</div>
<div class="t c" style="left: 1064.2px; top: 560.84px; transform: scaleX(0.8946); transform-origin: 0px 0px;">ID2.SG1 &gt; ID3.SG1, ID3.SG1 &gt; ID4.SG1,</div>
<div class="t c" style="left: 1264.7px; top: 560.84px; transform: scaleX(0.9058); transform-origin: 0px 0px;">ID4.SG1 &gt; ID5.SG1),</div>
<div class="t c" style="left: 1368.2px; top: 560.84px; transform: scaleX(0.9081); transform-origin: 0px 0px;">AND(ID5.SG1 &gt; ID4.SG1, ID4.SG1 &gt; ID3.SG1, ...))</div>
<div class="t c" style="left: 1618.2px; top: 560.84px; transform: scaleX(1.0071); transform-origin: 0px 0px;">| No alert sound/email.</div>
<div class="t c" style="left: 1757.6px; top: 560.84px; transform: scaleX(0.9513); transform-origin: 0px 0px;">2021-07-13</div>
<div class="t c" style="left: 1823.2px; top: 560.84px; transform: scaleX(0.8819); transform-origin: 0px 0px;">12:29:15</div>
<div class="t c" style="left: 5px; top: 579.84px; transform: scaleX(1.0102); transform-origin: 0px 0px;">Study</div>
<div class="t c" style="left:105.0px;top:579.84px">Moving Average - Exponential</div>
<div class="t c" style="left: 277.7px; top: 579.84px; transform: scaleX(0.9546); transform-origin: 0px 0px;">Alert Formula Error - Chart: F.US.ENQU21</div>
<div class="t c" style="left: 499.5px; top: 579.84px; transform: scaleX(1.0155); transform-origin: 0px 0px;">1 Min</div>
<div class="t c" style="left: 537.6px; top: 579.84px; transform: scaleX(0.9995); transform-origin: 0px 0px;">#1 | Study: Moving Average - Exponential</div>
<div class="t c" style="left: 760.1px; top: 579.84px; transform: scaleX(0.9276); transform-origin: 0px 0px;">| Error: #SYNTAX! | Formula:</div>
<div class="t c" style="left: 908px; top: 579.84px; transform: scaleX(0.9087); transform-origin: 0px 0px;">=OR(AND(ID1.SG1 &gt; ID2.SG1,</div>
<div class="t c" style="left: 1064.2px; top: 579.84px; transform: scaleX(0.8946); transform-origin: 0px 0px;">ID2.SG1 &gt; ID3.SG1, ID3.SG1 &gt; ID4.SG1,</div>
<div class="t c" style="left: 1264.7px; top: 579.84px; transform: scaleX(0.9058); transform-origin: 0px 0px;">ID4.SG1 &gt; ID5.SG1),</div>
<div class="t c" style="left: 1368.2px; top: 579.84px; transform: scaleX(0.9081); transform-origin: 0px 0px;">AND(ID5.SG1 &gt; ID4.SG1, ID4.SG1 &gt; ID3.SG1, ...))</div>
<div class="t c" style="left: 1618.2px; top: 579.84px; transform: scaleX(1.0071); transform-origin: 0px 0px;">| No alert sound/email.</div>
<div class="t c" style="left: 1757.6px; top: 579.84px; transform: scaleX(0.9513); transform-origin: 0px 0px;">2021-07-13</div>
<div class="t c" style="left: 1823.2px; top: 579.84px; transform: scaleX(0.8819); transform-origin: 0px 0px;">12:29:15</div>
<div class="t c" style="left: 5px; top: 598.84px; transform: scaleX(1.0102); transform-origin: 0px 0px;">Study</div>
<div class="t c" style="left:105.0px;top:598.84px">Moving Average - Exponential</div>
<div class="t c" style="left: 277.7px; top: 598.84px; transform: scaleX(0.9546); transform-origin: 0px 0px;">Alert Formula Error - Chart: F.US.ENQU21</div>
<div class="t c" style="left: 499.5px; top: 598.84px; transform: scaleX(1.0155); transform-origin: 0px 0px;">1 Min</div>
<div class="t c" style="left: 537.6px; top: 598.84px; transform: scaleX(0.9995); transform-origin: 0px 0px;">#1 | Study: Moving Average - Exponential</div>
<div class="t c" style="left: 760.1px; top: 598.84px; transform: scaleX(0.9276); transform-origin: 0px 0px;">| Error: #SYNTAX! | Formula:</div>
<div class="t c" style="left: 908px; top: 598.84px; transform: scaleX(0.9087); transform-origin: 0px 0px;">=OR(AND(ID1.SG1 &gt; ID2.SG1,</div>
<div class="t c" style="left: 1064.2px; top: 598.84px; transform: scaleX(0.8946); transform-origin: 0px 0px;">ID2.SG1 &gt; ID3.SG1, ID3.SG1 &gt; ID4.SG1,</div>
<div class="t c" style="left: 1264.7px; top: 598.84px; transform: scaleX(0.9058); transform-origin: 0px 0px;">ID4.SG1 &gt; ID5.SG1),</div>
<div class="t c" style="left: 1368.2px; top: 598.84px; transform: scaleX(0.9081); transform-origin: 0px 0px;">AND(ID5.SG1 &gt; ID4.SG1, ID4.SG1 &gt; ID3.SG1, ...))</div>
<div class="t c" style="left: 1618.2px; top: 598.84px; transform: scaleX(1.0071); transform-origin: 0px 0px;">| No alert sound/email.</div>
<div class="t c" style="left: 1757.6px; top: 598.84px; transform: scaleX(0.9513); transform-origin: 0px 0px;">2021-07-13</div>
<div class="t c" style="left: 1823.2px; top: 598.84px; transform: scaleX(0.8819); transform-origin: 0px 0px;">12:29:16</div>
<div class="t c" style="left: 5px; top: 617.84px; transform: scaleX(1.0102); transform-origin: 0px 0px;">Study</div>
<div class="t c" style="left:105.0px;top:617.84px">Moving Average - Exponential</div>
<div class="t c" style="left: 277.7px; top: 617.84px; transform: scaleX(0.9546); transform-origin: 0px 0px;">Alert Formula Error - Chart: F.US.ENQU21</div>
<div class="t c" style="left: 499.5px; top: 617.84px; transform: scaleX(1.0155); transform-origin: 0px 0px;">1 Min</div>
<div class="t c" style="left: 537.6px; top: 617.84px; transform: scaleX(0.9995); transform-origin: 0px 0px;">#1 | Study: Moving Average - Exponential</div>
<div class="t c" style="left: 760.1px; top: 617.84px; transform: scaleX(0.9276); transform-origin: 0px 0px;">| Error: #SYNTAX! | Formula:</div>
<div class="t c" style="left: 908px; top: 617.84px; transform: scaleX(0.9087); transform-origin: 0px 0px;">=OR(AND(ID1.SG1 &gt; ID2.SG1,</div>
<div class="t c" style="left: 1064.2px; top: 617.84px; transform: scaleX(0.8946); transform-origin: 0px 0px;">ID2.SG1 &gt; ID3.SG1, ID3.SG1 &gt; ID4.SG1,</div>
<div class="t c" style="left: 1264.7px; top: 617.84px; transform: scaleX(0.8895); transform-origin: 0px 0px;">ID4.SG1 &gt; ID5.SG1)</div>
<div class="t c" style="left: 1366.1px; top: 617.84px; transform: scaleX(1.0071); transform-origin: 0px 0px;">| No alert sound/email.</div>
<div class="t c" style="left: 1757.6px; top: 617.84px; transform: scaleX(0.9513); transform-origin: 0px 0px;">2021-07-13</div>
<div class="t c" style="left: 1823.2px; top: 617.84px; transform: scaleX(0.8819); transform-origin: 0px 0px;">12:30:59</div>
<div class="t c" style="left: 5px; top: 636.84px; transform: scaleX(1.0102); transform-origin: 0px 0px;">Study</div>
<div class="t c" style="left:105.0px;top:636.84px">Moving Average - Exponential</div>
<div class="t c" style="left: 277.7px; top: 636.84px; transform: scaleX(0.9546); transform-origin: 0px 0px;">Alert Formula Error - Chart: F.US.ENQU21</div>
<div class="t c" style="left: 499.5px; top: 636.84px; transform: scaleX(1.0155); transform-origin: 0px 0px;">1 Min</div>
<div class="t c" style="left: 537.6px; top: 636.84px; transform: scaleX(0.9995); transform-origin: 0px 0px;">#1 | Study: Moving Average - Exponential</div>
<div class="t c" style="left: 760.1px; top: 636.84px; transform: scaleX(0.9276); transform-origin: 0px 0px;">| Error: #SYNTAX! | Formula:</div>
<div class="t c" style="left: 908px; top: 636.84px; transform: scaleX(0.9087); transform-origin: 0px 0px;">=OR(AND(ID1.SG1 &gt; ID2.SG1,</div>
<div class="t c" style="left: 1064.2px; top: 636.84px; transform: scaleX(0.8946); transform-origin: 0px 0px;">ID2.SG1 &gt; ID3.SG1, ID3.SG1 &gt; ID4.SG1,</div>
<div class="t c" style="left: 1264.7px; top: 636.84px; transform: scaleX(0.8895); transform-origin: 0px 0px;">ID4.SG1 &gt; ID5.SG1)</div>
<div class="t c" style="left: 1366.1px; top: 636.84px; transform: scaleX(1.0071); transform-origin: 0px 0px;">| No alert sound/email.</div>
<div class="t c" style="left: 1757.6px; top: 636.84px; transform: scaleX(0.9513); transform-origin: 0px 0px;">2021-07-13</div>
<div class="t c" style="left: 1823.2px; top: 636.84px; transform: scaleX(0.8819); transform-origin: 0px 0px;">12:31:00</div>
<div class="t c" style="left: 5px; top: 655.84px; transform: scaleX(1.0102); transform-origin: 0px 0px;">Study</div>
<div class="t c" style="left:105.0px;top:655.84px">Moving Average - Exponential</div>
<div class="t c" style="left: 277.7px; top: 655.84px; transform: scaleX(0.9546); transform-origin: 0px 0px;">Alert Formula Error - Chart: F.US.ENQU21</div>
<div class="t c" style="left: 499.5px; top: 655.84px; transform: scaleX(1.0155); transform-origin: 0px 0px;">1 Min</div>
<div class="t c" style="left: 537.6px; top: 655.84px; transform: scaleX(0.9995); transform-origin: 0px 0px;">#1 | Study: Moving Average - Exponential</div>
<div class="t c" style="left: 760.1px; top: 655.84px; transform: scaleX(0.9276); transform-origin: 0px 0px;">| Error: #SYNTAX! | Formula:</div>
<div class="t c" style="left: 908px; top: 655.84px; transform: scaleX(0.9087); transform-origin: 0px 0px;">=OR(AND(ID1.SG1 &gt; ID2.SG1,</div>
<div class="t c" style="left: 1064.2px; top: 655.84px; transform: scaleX(0.8946); transform-origin: 0px 0px;">ID2.SG1 &gt; ID3.SG1, ID3.SG1 &gt; ID4.SG1,</div>
<div class="t c" style="left: 1264.7px; top: 655.84px; transform: scaleX(0.8895); transform-origin: 0px 0px;">ID4.SG1 &gt; ID5.SG1)</div>
<div class="t c" style="left: 1366.1px; top: 655.84px; transform: scaleX(1.0071); transform-origin: 0px 0px;">| No alert sound/email.</div>
<div class="t c" style="left: 1757.6px; top: 655.84px; transform: scaleX(0.9513); transform-origin: 0px 0px;">2021-07-13</div>
<div class="t c" style="left: 1823.2px; top: 655.84px; transform: scaleX(0.8819); transform-origin: 0px 0px;">12:31:00</div>
<div class="t c" style="left: 5px; top: 674.84px; transform: scaleX(1.0102); transform-origin: 0px 0px;">Study</div>
<div class="t c" style="left:105.0px;top:674.84px">Moving Average - Exponential</div>
<div class="t c" style="left: 277.7px; top: 674.84px; transform: scaleX(0.9546); transform-origin: 0px 0px;">Alert Formula Error - Chart: F.US.ENQU21</div>
<div class="t c" style="left: 499.5px; top: 674.84px; transform: scaleX(1.0155); transform-origin: 0px 0px;">1 Min</div>
<div class="t c" style="left: 537.6px; top: 674.84px; transform: scaleX(0.9995); transform-origin: 0px 0px;">#1 | Study: Moving Average - Exponential</div>
<div class="t c" style="left: 760.1px; top: 674.84px; transform: scaleX(0.9276); transform-origin: 0px 0px;">| Error: #SYNTAX! | Formula:</div>
<div class="t c" style="left: 908px; top: 674.84px; transform: scaleX(0.9087); transform-origin: 0px 0px;">=OR(AND(ID1.SG1 &gt; ID2.SG1,</div>
<div class="t c" style="left: 1064.2px; top: 674.84px; transform: scaleX(0.8946); transform-origin: 0px 0px;">ID2.SG1 &gt; ID3.SG1, ID3.SG1 &gt; ID4.SG1,</div>
<div class="t c" style="left: 1264.7px; top: 674.84px; transform: scaleX(0.8895); transform-origin: 0px 0px;">ID4.SG1 &gt; ID5.SG1)</div>
<div class="t c" style="left: 1366.1px; top: 674.84px; transform: scaleX(1.0071); transform-origin: 0px 0px;">| No alert sound/email.</div>
<div class="t c" style="left: 1757.6px; top: 674.84px; transform: scaleX(0.9513); transform-origin: 0px 0px;">2021-07-13</div>
<div class="t c" style="left: 1823.2px; top: 674.84px; transform: scaleX(0.8819); transform-origin: 0px 0px;">12:31:06</div>
<div class="t c" style="left: 5px; top: 693.84px; transform: scaleX(1.0102); transform-origin: 0px 0px;">Study</div>
<div class="t c" style="left:105.0px;top:693.84px">Moving Average - Exponential</div>
<div class="t c" style="left: 277.7px; top: 693.84px; transform: scaleX(0.9546); transform-origin: 0px 0px;">Alert Formula Error - Chart: F.US.ENQU21</div>
<div class="t c" style="left: 499.5px; top: 693.84px; transform: scaleX(1.0155); transform-origin: 0px 0px;">1 Min</div>
<div class="t c" style="left: 537.6px; top: 693.84px; transform: scaleX(0.9995); transform-origin: 0px 0px;">#1 | Study: Moving Average - Exponential</div>
<div class="t c" style="left: 760.1px; top: 693.84px; transform: scaleX(0.9276); transform-origin: 0px 0px;">| Error: #SYNTAX! | Formula:</div>
<div class="t c" style="left: 908px; top: 693.84px; transform: scaleX(0.9087); transform-origin: 0px 0px;">=OR(AND(ID1.SG1 &gt; ID2.SG1,</div>
<div class="t c" style="left: 1064.2px; top: 693.84px; transform: scaleX(0.8946); transform-origin: 0px 0px;">ID2.SG1 &gt; ID3.SG1, ID3.SG1 &gt; ID4.SG1,</div>
<div class="t c" style="left: 1264.7px; top: 693.84px; transform: scaleX(0.8895); transform-origin: 0px 0px;">ID4.SG1 &gt; ID5.SG1)</div>
<div class="t c" style="left: 1366.1px; top: 693.84px; transform: scaleX(1.0071); transform-origin: 0px 0px;">| No alert sound/email.</div>
<div class="t c" style="left: 1757.6px; top: 693.84px; transform: scaleX(0.9513); transform-origin: 0px 0px;">2021-07-13</div>
<div class="t c" style="left: 1823.2px; top: 693.84px; transform: scaleX(0.8819); transform-origin: 0px 0px;">12:31:06</div>
<div class="t c" style="left: 5px; top: 712.84px; transform: scaleX(1.0102); transform-origin: 0px 0px;">Study</div>
<div class="t c" style="left:105.0px;top:712.84px">Moving Average - Exponential</div>
<div class="t c" style="left: 277.7px; top: 712.84px; transform: scaleX(0.9546); transform-origin: 0px 0px;">Alert Formula Error - Chart: F.US.ENQU21</div>
<div class="t c" style="left: 499.5px; top: 712.84px; transform: scaleX(1.0155); transform-origin: 0px 0px;">1 Min</div>
<div class="t c" style="left: 537.6px; top: 712.84px; transform: scaleX(0.9995); transform-origin: 0px 0px;">#1 | Study: Moving Average - Exponential</div>
<div class="t c" style="left: 760.1px; top: 712.84px; transform: scaleX(0.9276); transform-origin: 0px 0px;">| Error: #SYNTAX! | Formula:</div>
<div class="t c" style="left: 908px; top: 712.84px; transform: scaleX(0.9087); transform-origin: 0px 0px;">=OR(AND(ID1.SG1 &gt; ID2.SG1,</div>
<div class="t c" style="left: 1064.2px; top: 712.84px; transform: scaleX(0.8946); transform-origin: 0px 0px;">ID2.SG1 &gt; ID3.SG1, ID3.SG1 &gt; ID4.SG1,</div>
<div class="t c" style="left: 1264.7px; top: 712.84px; transform: scaleX(0.8895); transform-origin: 0px 0px;">ID4.SG1 &gt; ID5.SG1)</div>
<div class="t c" style="left: 1366.1px; top: 712.84px; transform: scaleX(1.0071); transform-origin: 0px 0px;">| No alert sound/email.</div>
<div class="t c" style="left: 1757.6px; top: 712.84px; transform: scaleX(0.9513); transform-origin: 0px 0px;">2021-07-13</div>
<div class="t c" style="left: 1823.2px; top: 712.84px; transform: scaleX(0.8819); transform-origin: 0px 0px;">12:31:07</div>
<div class="t c" style="left: 5px; top: 731.84px; transform: scaleX(1.0102); transform-origin: 0px 0px;">Study</div>
<div class="t c" style="left:105.0px;top:731.84px">Moving Average - Exponential</div>
<div class="t c" style="left: 277.7px; top: 731.84px; transform: scaleX(0.9546); transform-origin: 0px 0px;">Alert Formula Error - Chart: F.US.ENQU21</div>
<div class="t c" style="left: 499.5px; top: 731.84px; transform: scaleX(1.0155); transform-origin: 0px 0px;">1 Min</div>
<div class="t c" style="left: 537.6px; top: 731.84px; transform: scaleX(0.9995); transform-origin: 0px 0px;">#1 | Study: Moving Average - Exponential</div>
<div class="t c" style="left: 760.1px; top: 731.84px; transform: scaleX(0.9276); transform-origin: 0px 0px;">| Error: #SYNTAX! | Formula:</div>
<div class="t c" style="left: 908px; top: 731.84px; transform: scaleX(0.9087); transform-origin: 0px 0px;">=OR(AND(ID1.SG1 &gt; ID2.SG1,</div>
<div class="t c" style="left: 1064.2px; top: 731.84px; transform: scaleX(0.8946); transform-origin: 0px 0px;">ID2.SG1 &gt; ID3.SG1, ID3.SG1 &gt; ID4.SG1,</div>
<div class="t c" style="left: 1264.7px; top: 731.84px; transform: scaleX(0.8895); transform-origin: 0px 0px;">ID4.SG1 &gt; ID5.SG1)</div>
<div class="t c" style="left: 1366.1px; top: 731.84px; transform: scaleX(1.0071); transform-origin: 0px 0px;">| No alert sound/email.</div>
<div class="t c" style="left: 1757.6px; top: 731.84px; transform: scaleX(0.9513); transform-origin: 0px 0px;">2021-07-13</div>
<div class="t c" style="left: 1823.2px; top: 731.84px; transform: scaleX(0.8819); transform-origin: 0px 0px;">12:31:52</div>
<div class="t c" style="left: 5px; top: 750.84px; transform: scaleX(1.0102); transform-origin: 0px 0px;">Study</div>
<div class="t c" style="left:105.0px;top:750.84px">Moving Average - Exponential</div>
<div class="t c" style="left: 277.7px; top: 750.84px; transform: scaleX(0.9546); transform-origin: 0px 0px;">Alert Formula Error - Chart: F.US.ENQU21</div>
<div class="t c" style="left: 499.5px; top: 750.84px; transform: scaleX(1.0155); transform-origin: 0px 0px;">1 Min</div>
<div class="t c" style="left: 537.6px; top: 750.84px; transform: scaleX(0.9995); transform-origin: 0px 0px;">#1 | Study: Moving Average - Exponential</div>
<div class="t c" style="left: 760.1px; top: 750.84px; transform: scaleX(0.9276); transform-origin: 0px 0px;">| Error: #SYNTAX! | Formula:</div>
<div class="t c" style="left: 908px; top: 750.84px; transform: scaleX(0.9087); transform-origin: 0px 0px;">=OR(AND(ID1.SG1 &gt; ID2.SG1,</div>
<div class="t c" style="left: 1064.2px; top: 750.84px; transform: scaleX(0.8946); transform-origin: 0px 0px;">ID2.SG1 &gt; ID3.SG1, ID3.SG1 &gt; ID4.SG1,</div>
<div class="t c" style="left: 1264.7px; top: 750.84px; transform: scaleX(0.8895); transform-origin: 0px 0px;">ID4.SG1 &gt; ID5.SG1)</div>
<div class="t c" style="left: 1366.1px; top: 750.84px; transform: scaleX(1.0071); transform-origin: 0px 0px;">| No alert sound/email.</div>
<div class="t c" style="left: 1757.6px; top: 750.84px; transform: scaleX(0.9513); transform-origin: 0px 0px;">2021-07-13</div>
<div class="t c" style="left: 1823.2px; top: 750.84px; transform: scaleX(0.8819); transform-origin: 0px 0px;">12:31:52</div>
<div class="t c" style="left: 5px; top: 769.84px; transform: scaleX(1.0102); transform-origin: 0px 0px;">Study</div>
<div class="t c" style="left:105.0px;top:769.84px">Moving Average - Exponential</div>
<div class="t c" style="left: 277.7px; top: 769.84px; transform: scaleX(0.9546); transform-origin: 0px 0px;">Alert Formula Error - Chart: F.US.ENQU21</div>
<div class="t c" style="left: 499.5px; top: 769.84px; transform: scaleX(1.0155); transform-origin: 0px 0px;">1 Min</div>
<div class="t c" style="left: 537.6px; top: 769.84px; transform: scaleX(0.9995); transform-origin: 0px 0px;">#1 | Study: Moving Average - Exponential</div>
<div class="t c" style="left: 760.1px; top: 769.84px; transform: scaleX(0.9276); transform-origin: 0px 0px;">| Error: #SYNTAX! | Formula:</div>
<div class="t c" style="left: 908px; top: 769.84px; transform: scaleX(0.9087); transform-origin: 0px 0px;">=OR(AND(ID1.SG1 &gt; ID2.SG1,</div>
<div class="t c" style="left: 1064.2px; top: 769.84px; transform: scaleX(0.8946); transform-origin: 0px 0px;">ID2.SG1 &gt; ID3.SG1, ID3.SG1 &gt; ID4.SG1,</div>
<div class="t c" style="left: 1264.7px; top: 769.84px; transform: scaleX(0.8895); transform-origin: 0px 0px;">ID4.SG1 &gt; ID5.SG1)</div>
<div class="t c" style="left: 1366.1px; top: 769.84px; transform: scaleX(1.0071); transform-origin: 0px 0px;">| No alert sound/email.</div>
<div class="t c" style="left: 1757.6px; top: 769.84px; transform: scaleX(0.9513); transform-origin: 0px 0px;">2021-07-13</div>
<div class="t c" style="left: 1823.2px; top: 769.84px; transform: scaleX(0.8819); transform-origin: 0px 0px;">12:31:52</div>
<div class="t c" style="left: 5px; top: 788.84px; transform: scaleX(1.0102); transform-origin: 0px 0px;">Study</div>
<div class="t c" style="left:105.0px;top:788.84px">200 EMA</div>
<div class="t c" style="left: 277.7px; top: 788.84px; transform: scaleX(0.9524); transform-origin: 0px 0px;">Alert Formula Error - Chart: F.US.CLEQ21 [CV]</div>
<div class="t c" style="left: 521.7px; top: 788.84px; transform: scaleX(1.0496); transform-origin: 0px 0px;">1 Min</div>
<div class="t c" style="left: 560.8px; top: 788.84px; transform: scaleX(0.953); transform-origin: 0px 0px;">#2 | Study: 200 EMA</div>
<div class="t c" style="left: 669.2px; top: 788.84px; transform: scaleX(0.9302); transform-origin: 0px 0px;">| Error: #SYNTAX! | Formula:</div>
<div class="t c" style="left: 817.2px; top: 788.84px; transform: scaleX(0.9096); transform-origin: 0px 0px;">=OR(AND(ID1.SG1 &gt; ID2.SG1, ID2.SG1 &gt; ID3.SG1,</div>
<div class="t c" style="left: 1073.4px; top: 788.84px; transform: scaleX(0.8906); transform-origin: 0px 0px;">ID3.SG1 &gt; ID4.SG1, ID4.SG1 &gt; ID5.SG1)</div>
<div class="t c" style="left: 1275.2px; top: 788.84px; transform: scaleX(1.0071); transform-origin: 0px 0px;">| No alert sound/email.</div>
<div class="t c" style="left: 1757.6px; top: 788.84px; transform: scaleX(0.9513); transform-origin: 0px 0px;">2021-07-13</div>
<div class="t c" style="left: 1823.2px; top: 788.84px; transform: scaleX(0.8819); transform-origin: 0px 0px;">12:32:43</div>
<div class="t c" style="left: 5px; top: 807.84px; transform: scaleX(1.0102); transform-origin: 0px 0px;">Study</div>
<div class="t c" style="left:105.0px;top:807.84px">200 EMA</div>
<div class="t c" style="left: 277.7px; top: 807.84px; transform: scaleX(0.9524); transform-origin: 0px 0px;">Alert Formula Error - Chart: F.US.CLEQ21 [CV]</div>
<div class="t c" style="left: 521.7px; top: 807.84px; transform: scaleX(1.0496); transform-origin: 0px 0px;">1 Min</div>
<div class="t c" style="left: 560.8px; top: 807.84px; transform: scaleX(0.953); transform-origin: 0px 0px;">#2 | Study: 200 EMA</div>
<div class="t c" style="left: 669.2px; top: 807.84px; transform: scaleX(0.9302); transform-origin: 0px 0px;">| Error: #SYNTAX! | Formula:</div>
<div class="t c" style="left: 817.2px; top: 807.84px; transform: scaleX(0.9096); transform-origin: 0px 0px;">=OR(AND(ID1.SG1 &gt; ID2.SG1, ID2.SG1 &gt; ID3.SG1,</div>
<div class="t c" style="left: 1073.4px; top: 807.84px; transform: scaleX(0.8906); transform-origin: 0px 0px;">ID3.SG1 &gt; ID4.SG1, ID4.SG1 &gt; ID5.SG1)</div>
<div class="t c" style="left: 1275.2px; top: 807.84px; transform: scaleX(1.0071); transform-origin: 0px 0px;">| No alert sound/email.</div>
<div class="t c" style="left: 1757.6px; top: 807.84px; transform: scaleX(0.9513); transform-origin: 0px 0px;">2021-07-13</div>
<div class="t c" style="left: 1823.2px; top: 807.84px; transform: scaleX(0.8819); transform-origin: 0px 0px;">12:32:44</div>
<div class="t c" style="left: 5px; top: 826.84px; transform: scaleX(1.0102); transform-origin: 0px 0px;">Study</div>
<div class="t c" style="left:105.0px;top:826.84px">200 EMA</div>
<div class="t c" style="left: 277.7px; top: 826.84px; transform: scaleX(0.9524); transform-origin: 0px 0px;">Alert Formula Error - Chart: F.US.CLEQ21 [CV]</div>
<div class="t c" style="left: 521.7px; top: 826.84px; transform: scaleX(1.0496); transform-origin: 0px 0px;">1 Min</div>
<div class="t c" style="left: 560.8px; top: 826.84px; transform: scaleX(0.953); transform-origin: 0px 0px;">#2 | Study: 200 EMA</div>
<div class="t c" style="left: 669.2px; top: 826.84px; transform: scaleX(0.9302); transform-origin: 0px 0px;">| Error: #SYNTAX! | Formula:</div>
<div class="t c" style="left: 817.2px; top: 826.84px; transform: scaleX(0.9096); transform-origin: 0px 0px;">=OR(AND(ID1.SG1 &gt; ID2.SG1, ID2.SG1 &gt; ID3.SG1,</div>
<div class="t c" style="left: 1073.4px; top: 826.84px; transform: scaleX(0.8906); transform-origin: 0px 0px;">ID3.SG1 &gt; ID4.SG1, ID4.SG1 &gt; ID5.SG1)</div>
<div class="t c" style="left: 1275.2px; top: 826.84px; transform: scaleX(1.0071); transform-origin: 0px 0px;">| No alert sound/email.</div>
<div class="t c" style="left: 1757.6px; top: 826.84px; transform: scaleX(0.9513); transform-origin: 0px 0px;">2021-07-13</div>
<div class="t c" style="left: 1823.2px; top: 826.84px; transform: scaleX(0.8819); transform-origin: 0px 0px;">12:32:44</div>
</body></html>
